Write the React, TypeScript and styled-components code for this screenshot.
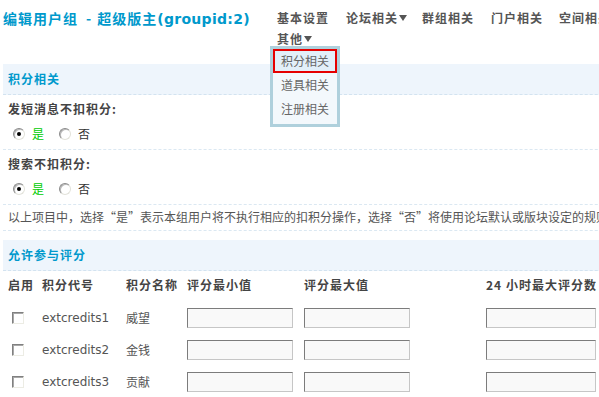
import React from 'react';
import styled, { createGlobalStyle } from 'styled-components';

const GlobalStyle = createGlobalStyle`
    html, body {
        margin: 0;
        padding: 0;
        overflow: hidden;
        background: #fff;
    }
    body {
        font-family: "DejaVu Sans", "Noto Sans CJK SC", sans-serif;
        font-size: 12px;
        line-height: 16px;
        color: #555;
    }
`;

const cjk = `"Noto Sans CJK SC", "DejaVu Sans", sans-serif`;

const Page = styled.div`
    width: 680px;
    padding-left: 3px;
`;

const Header = styled.div`
    display: flex;
    align-items: flex-start;
    height: 64px;
`;

const Title = styled.h1`
    margin: 0;
    width: 274px;
    padding-top: 8px;
    font-family: ${cjk};
    font-size: 14px;
    line-height: 20px;
    font-weight: bold;
    color: #0099cc;
    letter-spacing: 1px;
`;

const Dash = styled.span`
    margin: 0 6px 0 8px;
    letter-spacing: 0;
`;

const Latin = styled.span`
    font-family: "DejaVu Sans", sans-serif;
    letter-spacing: 0.3px;
`;

const Nav = styled.ul`
    display: flex;
    flex-wrap: wrap;
    width: 360px;
    margin: 0;
    padding: 7px 0 0;
    list-style: none;
`;

const NavItem = styled.li<{ $gap: number }>`
    position: relative;
    display: flex;
    align-items: center;
    height: 21px;
    padding-right: ${(p) => p.$gap}px;
    font-family: ${cjk};
    font-weight: bold;
    color: #555;
    letter-spacing: 1px;
`;

const Arrow = styled.span`
    width: 0;
    height: 0;
    margin-left: 1px;
    border-left: 4px solid transparent;
    border-right: 4px solid transparent;
    border-top: 6px solid #555;
`;

const Dropdown = styled.div`
    position: absolute;
    top: 18px;
    left: -7px;
    z-index: 10;
    width: 64px;
    padding-bottom: 3px;
    border: 3px solid #afd0dc;
    background: #f3f8fc;
    font-weight: normal;
    letter-spacing: 0;
`;

const DropItem = styled.div<{ $active?: boolean }>`
    height: 20px;
    line-height: 20px;
    padding-left: 6px;
    border: 2px solid ${(p) => (p.$active ? '#e60000' : 'transparent')};
    background: ${(p) => (p.$active ? '#e2eff9' : 'transparent')};
    color: #666;
`;

const SectionBar = styled.div<{ $top?: number }>`
    height: 30px;
    line-height: 30px;
    margin-top: ${(p) => p.$top || 0}px;
    padding-left: 5px;
    background: #eef5fc;
    border-bottom: 1px dashed #d3e3f0;
    font-family: ${cjk};
    font-weight: bold;
    color: #0099cc;
    letter-spacing: 1px;
`;

const FormItem = styled.div`
    padding: 6px 5px;
    border-bottom: 1px dashed #dbe8f2;
`;

const Label = styled.div`
    height: 16px;
    font-family: ${cjk};
    font-weight: bold;
    color: #444;
    letter-spacing: 1px;
`;

const RadioRow = styled.div`
    display: flex;
    align-items: center;
    height: 18px;
    margin-top: 8px;
    padding-left: 5px;
    font-family: ${cjk};
`;

const Radio = styled.span<{ $checked?: boolean }>`
    position: relative;
    box-sizing: border-box;
    width: 12px;
    height: 12px;
    margin-right: 7px;
    border-radius: 50%;
    border: 1px solid;
    border-color: #8a8a8a #e2e2da #e2e2da #8a8a8a;
    background: #fff;
    box-shadow: inset 1px 1px 0 #b8b8b8;

    &::after {
        content: '';
        display: ${(p) => (p.$checked ? 'block' : 'none')};
        position: absolute;
        left: 3px;
        top: 3px;
        width: 4px;
        height: 4px;
        border-radius: 50%;
        background: #000;
    }
`;

const Choice = styled.span<{ $yes?: boolean }>`
    width: 12px;
    margin-right: 15px;
    color: ${(p) => (p.$yes ? '#00cc00' : '#333')};
`;

const Desc = styled.div`
    padding: 4px 5px 5px;
    border-bottom: 1px dashed #dbe8f2;
    white-space: nowrap;
    font-family: ${cjk};
    font-feature-settings: "fwid" 1;
    color: #555;
`;

const Row = styled.div<{ $head?: boolean }>`
    display: grid;
    grid-template-columns: 34px 84px 61px 117px 182px 130px;
    align-items: ${(p) => (p.$head ? 'start' : 'center')};
    height: ${(p) => (p.$head ? 25 : 32)}px;
    padding: ${(p) => (p.$head ? '6px 0 0 5px' : '0 0 0 5px')};
`;

const HeadCell = styled.span`
    font-family: ${cjk};
    font-weight: bold;
    color: #444;
    letter-spacing: 1px;
    white-space: nowrap;
`;

const Cell = styled.span<{ $cjk?: boolean }>`
    font-family: ${(p) => (p.$cjk ? cjk : '"DejaVu Sans", sans-serif')};
    color: #555;
`;

const Check = styled.span`
    display: block;
    box-sizing: border-box;
    width: 12px;
    height: 12px;
    margin-left: 4px;
    border: 1px solid;
    border-color: #808080 #ecece4 #ecece4 #808080;
    background: #fff;
    box-shadow: inset 1px 1px 0 #a8a8a8;
`;

const Field = styled.input<{ $w: number }>`
    box-sizing: border-box;
    width: ${(p) => p.$w}px;
    height: 20px;
    margin: 0;
    padding: 0 3px;
    border: 1px solid;
    border-color: #7c7c7c #c6c6c6 #c6c6c6 #7c7c7c;
    background: #f9f9f9;
    outline: none;
`;

const navItems = [
    { label: '基本设置', gap: 17 },
    { label: '论坛相关', gap: 15, arrow: true },
    { label: '群组相关', gap: 17 },
    { label: '门户相关', gap: 16 },
    { label: '空间相关', gap: 17 },
];

const credits = [
    { code: 'extcredits1', name: '威望' },
    { code: 'extcredits2', name: '金钱' },
    { code: 'extcredits3', name: '贡献' },
];

const YesNo = () => (
    <RadioRow>
        <Radio $checked />
        <Choice $yes>是</Choice>
        <Radio />
        <Choice>否</Choice>
    </RadioRow>
);

const App: React.FC = () => {
    return (
        <Page lang="zh-CN">
            <GlobalStyle />
            <Header>
                <Title>
                    编辑用户组<Dash>-</Dash>超级版主<Latin>(groupid:2)</Latin>
                </Title>
                <Nav>
                    {navItems.map((item) => (
                        <NavItem key={item.label} $gap={item.gap}>
                            {item.label}
                            {item.arrow && <Arrow />}
                        </NavItem>
                    ))}
                    <NavItem $gap={17}>
                        其他
                        <Arrow />
                        <Dropdown>
                            <DropItem $active>积分相关</DropItem>
                            <DropItem>道具相关</DropItem>
                            <DropItem>注册相关</DropItem>
                        </Dropdown>
                    </NavItem>
                </Nav>
            </Header>

            <SectionBar>积分相关</SectionBar>
            <FormItem>
                <Label>发短消息不扣积分:</Label>
                <YesNo />
            </FormItem>
            <FormItem>
                <Label>搜索不扣积分:</Label>
                <YesNo />
            </FormItem>
            <Desc>
                以上项目中，选择“是”表示本组用户将不执行相应的扣积分操作，选择“否”将使用论坛默认或版块设定的规则
            </Desc>

            <SectionBar $top={9}>允许参与评分</SectionBar>
            <Row $head>
                <HeadCell>启用</HeadCell>
                <HeadCell>积分代号</HeadCell>
                <HeadCell>积分名称</HeadCell>
                <HeadCell>评分最小值</HeadCell>
                <HeadCell>评分最大值</HeadCell>
                <HeadCell>24 小时最大评分数</HeadCell>
            </Row>
            {credits.map((c) => (
                <Row key={c.code}>
                    <Check />
                    <Cell>{c.code}</Cell>
                    <Cell $cjk>{c.name}</Cell>
                    <Field $w={106} />
                    <Field $w={106} />
                    <Field $w={110} />
                </Row>
            ))}
        </Page>
    );
};

export default App;
